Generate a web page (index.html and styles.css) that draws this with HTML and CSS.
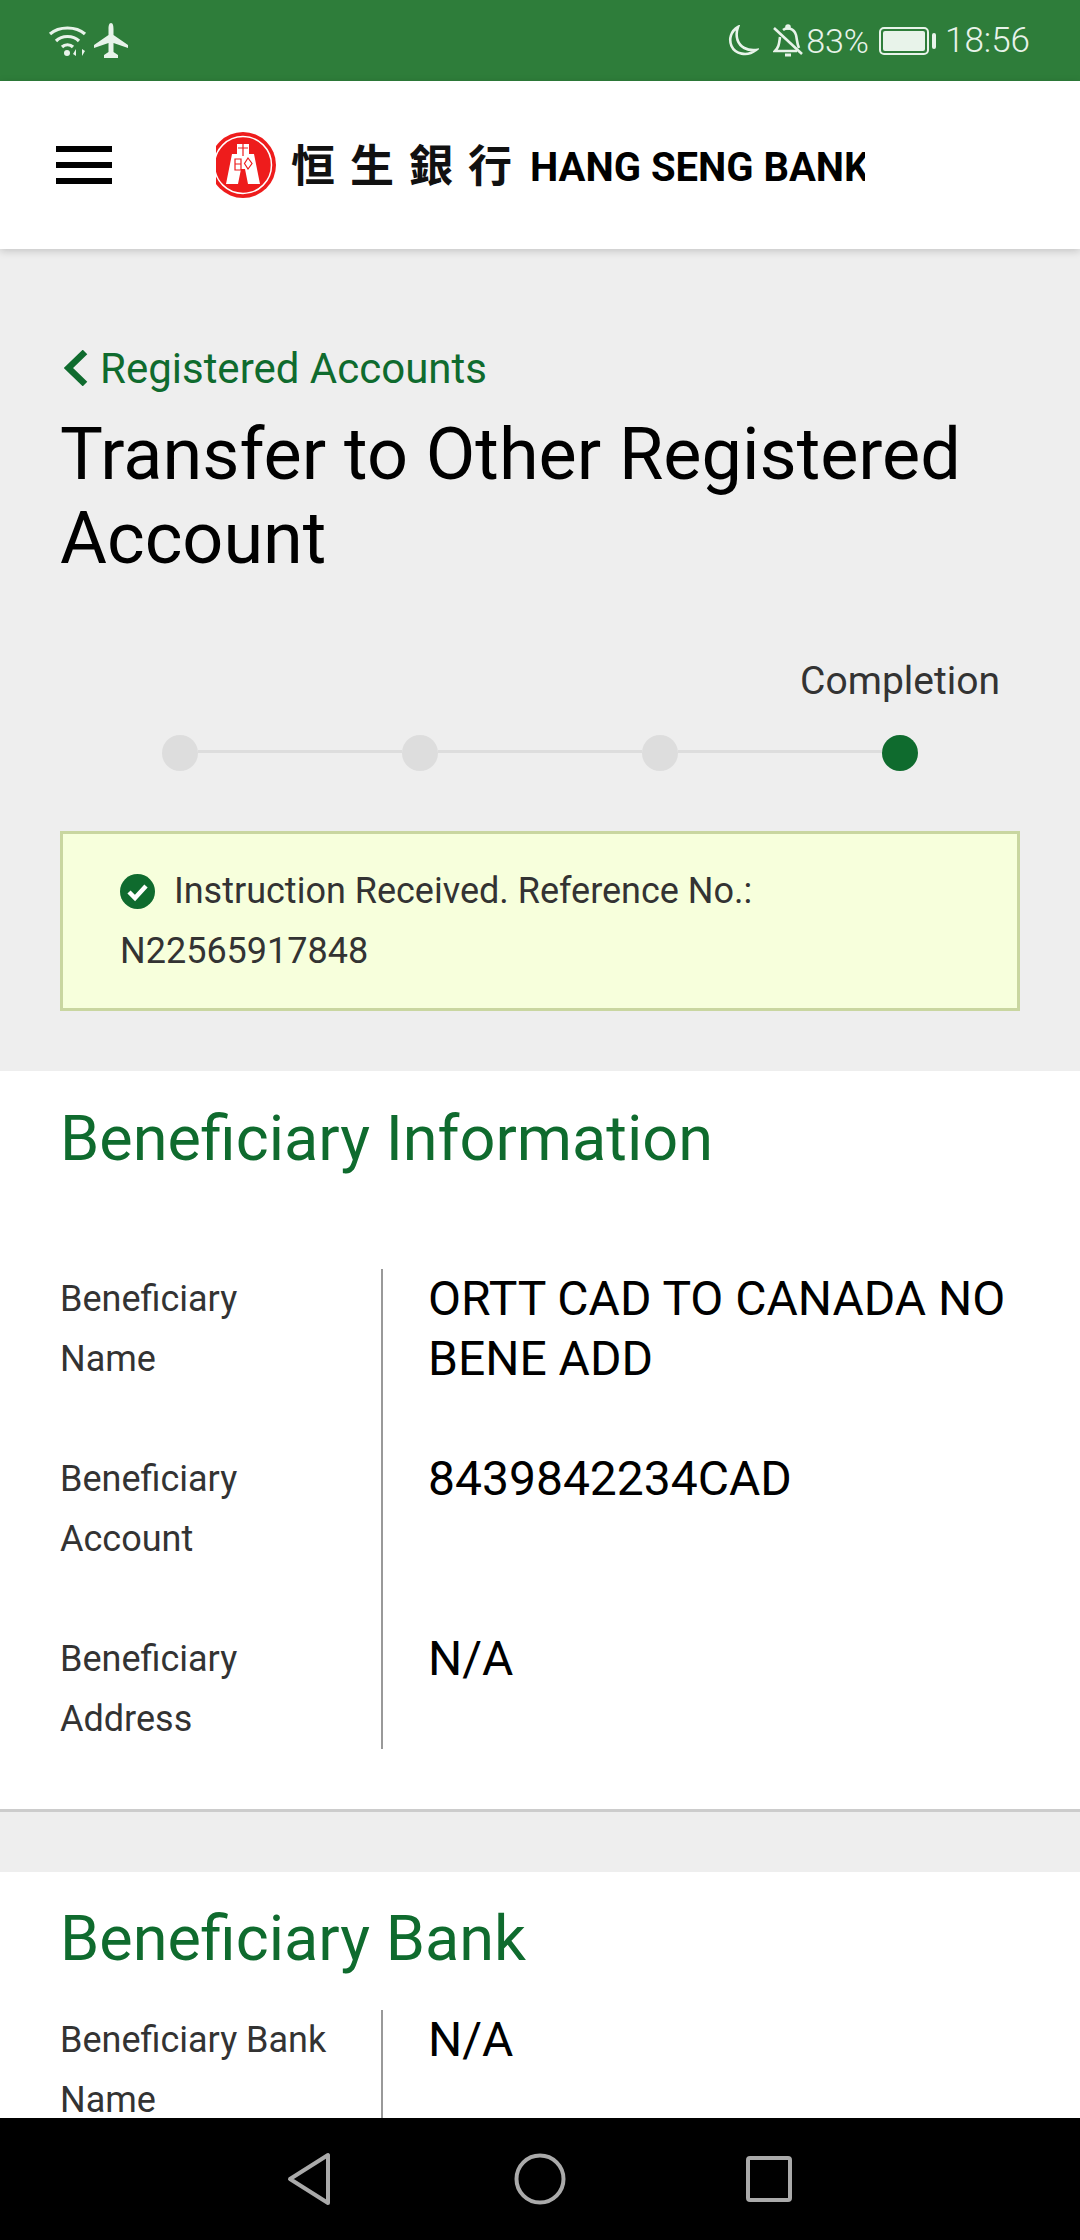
FILE: index.html
```html
<!DOCTYPE html>
<html lang="en">
<head>
<meta charset="utf-8">
<title>Transfer to Other Registered Account</title>
<link rel="stylesheet" href="styles.css">
</head>
<body>
<div class="app">
  <div class="status">
    <div class="status-left">
      <svg class="ic-wifi" width="42" height="36" viewBox="0 0 42 36" fill="none" stroke="#e8f3ea" stroke-width="3.2">
        <path d="M2 11C11 3 28 3 37 11"/>
        <path d="M8 18C14 12 25 12 31 18"/>
        <path d="M14 24C17 21 22 21 25 24"/>
        <circle cx="19" cy="30" r="3" fill="#e8f3ea" stroke="none"/>
        <path d="M28 33V26L25 31ZM34 26V33L37 28Z" fill="#e8f3ea" stroke="none"/>
      </svg>
      <svg class="ic-plane" width="34" height="36" viewBox="0 0 34 36" fill="#e8f3ea">
        <path d="M17 0C15 0 14.500 3 14.500 6V12L0 22V25L14.500 20V29L10 32V35H24V32L19.500 29V20L34 25V22L19.500 12V6C19.500 3 19 0 17 0Z"/>
      </svg>
    </div>
    <div class="status-right">
      <svg class="ic-moon" width="32" height="32" viewBox="0 0 32 32" fill="none" stroke="#e8f3ea" stroke-width="2.600">
        <path d="M11 2C4 6 1.500 14 4.500 21C8 29 20 32 29 25C20 26 13 22 10.500 15C9 10 9.500 6 11 2Z"/>
      </svg>
      <svg class="ic-bell" width="30" height="34" viewBox="0 0 30 34" fill="none" stroke="#e8f3ea" stroke-width="2.600">
        <path d="M1 4L29 30"/>
        <path d="M7 13C6 20 6 23 2 27H24M10 6C14 3 21 4 23 11C24 15 24 20 26 24"/>
        <path d="M12 31H18" stroke-width="3"/>
        <circle cx="15" cy="3" r="1.500"/>
      </svg>
      <span class="status-pct">83%</span>
      <div class="battery"><div class="battery-fill"></div></div>
      <div class="battery-tip"></div>
      <span class="status-time">18:56</span>
    </div>
  </div>

  <header class="topbar">
    <div class="burger"><span></span><span></span><span></span></div>
    <div class="logo">
      <svg class="logo-mark" width="66" height="66" viewBox="0 0 66 66">
        <circle cx="33" cy="33" r="33" fill="#ee1c1c"/>
        <circle cx="33" cy="33" r="28.500" fill="none" stroke="#fff" stroke-width="1.500"/>
        <path d="M27 12H39V22H44L50 52H38L35 37H31L28 52H16L22 22H27Z" fill="#fff"/>
        <path d="M33 10V24M28 16H38M25 27V38H31V27ZM25 32H31M38 26L42 31.500L38 37L34.500 31.500Z" fill="none" stroke="#ee1c1c" stroke-width="1.200"/>
      </svg>
      <span class="logo-cjk">恒生銀行</span>
      <span class="logo-en">HANG SENG BANK</span>
    </div>
  </header>

  <main class="main">
    <section class="intro">
      <a class="back">
        <svg class="back-chevron" width="24" height="36" viewBox="0 0 24 36" fill="none" stroke="#0f6b2e" stroke-width="6.500"><path d="M21 2L4.500 18L21 34"/></svg>
        <span>Registered Accounts</span>
      </a>
      <h1 class="title">Transfer to Other Registered Account</h1>
      <div class="step-label">Completion</div>
      <div class="stepper">
        <span class="dot"></span><span class="line"></span>
        <span class="dot"></span><span class="line"></span>
        <span class="dot"></span><span class="line"></span>
        <span class="dot dot-on"></span>
      </div>
      <div class="notice">
        <svg class="notice-check" width="35" height="35" viewBox="0 0 35 35">
          <circle cx="17.500" cy="17.500" r="17.500" fill="#0f6b2e"/>
          <path d="M9 18L15 24L26 12" fill="none" stroke="#fff" stroke-width="4.500"/>
        </svg>
        Instruction Received. Reference No.: N22565917848
      </div>
    </section>

    <section class="card card-first">
      <h2 class="card-title">Beneficiary Information</h2>
      <div class="row"><div class="label">Beneficiary Name</div><div class="value">ORTT CAD TO CANADA NO BENE ADD</div></div>
      <div class="row"><div class="label">Beneficiary Account</div><div class="value">8439842234CAD</div></div>
      <div class="row"><div class="label">Beneficiary Address</div><div class="value">N/A</div></div>
    </section>

    <section class="card card-second">
      <h2 class="card-title">Beneficiary Bank</h2>
      <div class="row"><div class="label">Beneficiary Bank Name</div><div class="value">N/A</div></div>
    </section>
  </main>

  <nav class="navbar">
    <svg width="46" height="54" viewBox="0 0 46 54" fill="none" stroke="#aaa" stroke-width="4" stroke-linejoin="round"><path d="M41 3V51L3 27Z"/></svg>
    <svg width="52" height="52" viewBox="0 0 52 52" fill="none" stroke="#aaa" stroke-width="4"><circle cx="26" cy="26" r="23.500"/></svg>
    <svg width="46" height="48" viewBox="0 0 46 48" fill="none" stroke="#aaa" stroke-width="4" stroke-linejoin="round"><rect x="2" y="3" width="42" height="42" rx="2"/></svg>
  </nav>
</div>
</body>
</html>
```

FILE: styles.css
```css
* { box-sizing: border-box; }
html, body { margin: 0; padding: 0; }
body { font-family: Roboto, "Noto Sans", sans-serif; background: #eee; color: #333; }

.app { width: 1080px; height: 2240px; display: flex; flex-direction: column; overflow: hidden; }

/* status bar */
.status { height: 81px; flex: none; background: #2e7d3a; color: #e8f3ea; display: flex; align-items: center; justify-content: space-between; padding: 0 50px 0 48px; }
.status-left { display: flex; align-items: center; gap: 4px; }
.status-right { display: flex; align-items: center; }
.ic-moon { margin-right: 14px; }
.ic-bell { margin-right: 3px; }
.status-pct { font-size: 34px; font-weight: 300; line-height: 40px; }
.status-time { font-size: 35px; font-weight: 300; line-height: 40px; }
.battery { width: 50px; height: 28px; margin-left: 10px; border: 2px solid #e8f3ea; border-radius: 5px; padding: 2px; }
.battery-fill { width: 100%; height: 100%; background: #e8f3ea; border-radius: 2px; }
.battery-tip { width: 4px; height: 16px; background: #e8f3ea; margin: 0 9px 0 3px; border-radius: 2px; }

/* top bar */
.topbar { height: 168px; flex: none; background: #fff; display: flex; align-items: center; padding: 0 0 0 56px; position: relative; z-index: 1; box-shadow: 0 2px 8px rgba(0, 0, 0, .18); }
.burger { width: 56px; display: flex; flex-direction: column; gap: 10px; margin-right: 104px; }
.burger span { height: 6px; background: #000; }
.logo { width: 649px; height: 70px; overflow: hidden; display: flex; align-items: center; white-space: nowrap; }
.logo-mark { flex: none; margin-left: -6px; margin-right: 15px; }
.logo-cjk { font-family: "Noto Sans CJK TC", sans-serif; font-size: 44px; font-weight: 700; letter-spacing: 15px; color: #111; margin-top: -4px; }
.logo-en { font-family: Roboto, sans-serif; font-weight: 700; font-size: 40px; line-height: 44px; color: #000; margin: 6px 0 0 3px; }

/* page */
.main { flex: 1; min-height: 0; overflow: hidden; background: #eee; }
.intro { padding: 89px 60px 60px; }
.back { display: flex; align-items: center; height: 60px; color: #0f6b2e; font-size: 42px; gap: 12px; margin-left: 4px; }
.title { margin: 15px 0 0; font-size: 72px; line-height: 84px; font-weight: 400; color: #000; }
.step-label { margin-top: 70px; font-size: 39px; line-height: 60px; text-align: right; padding-right: 20px; color: #333; }
.stepper { display: flex; align-items: center; padding: 24px 102px 0; }
.dot { width: 36px; height: 36px; border-radius: 50%; background: #ddd; flex: none; }
.dot-on { background: #0f6b2e; }
.line { flex: 1; height: 3px; background: #ddd; margin-bottom: 3px; }
.notice { margin-top: 60px; height: 180px; border: 3px solid #c9d6a0; background: #f7ffdc; padding: 27px 100px 27px 57px; font-size: 36px; line-height: 60px; color: #333; }
.notice-check { vertical-align: -6px; margin-right: 10px; }

.card { background: #fff; padding: 0 60px; }
.card-first { padding-bottom: 60px; border-bottom: 3px solid #ccc; }
.card-second { margin-top: 60px; }
.card-title { margin: 0; font-size: 63px; line-height: 90px; font-weight: 400; color: #0f6b2e; }
.card-first .card-title { padding: 23px 0 85px; }
.card-second .card-title { padding: 22px 0 26px; }
.row { display: grid; grid-template-columns: 323px 1fr; }
.label { border-right: 2px solid #999; padding: 0 50px 60px 0; font-size: 36px; line-height: 60px; color: #333; }
.row:last-child .label { padding-bottom: 0; }
.value { padding-left: 45px; font-size: 48px; line-height: 60px; color: #000; }

.navbar { height: 122px; flex: none; background: #000; display: flex; align-items: center; justify-content: center; padding-right: 2px; }
.navbar svg:nth-child(1) { margin-right: 181px; }
.navbar svg:nth-child(2) { margin-right: 180px; }
```
